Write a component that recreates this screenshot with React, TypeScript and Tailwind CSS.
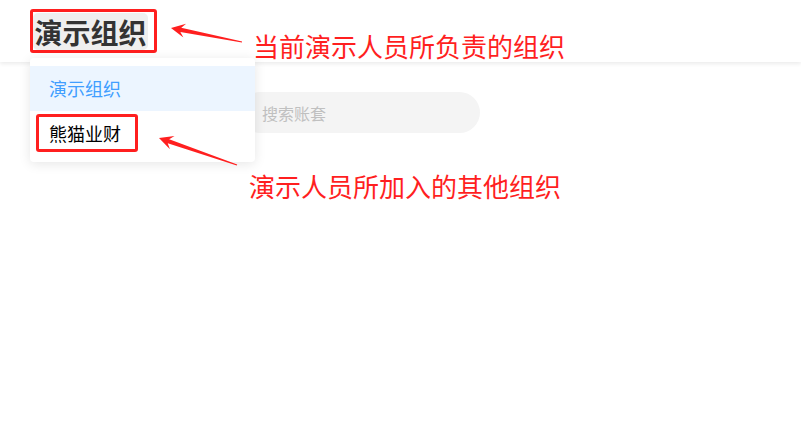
import React from "react";

function Arrow({ tip, tail, head = 14, barb = 7, neck = 2.2, tailW = 0.6 }: { tip: [number, number]; tail: [number, number]; head?: number; barb?: number; neck?: number; tailW?: number }) {
  const dx = tail[0] - tip[0];
  const dy = tail[1] - tip[1];
  const len = Math.hypot(dx, dy);
  const ux = dx / len;
  const uy = dy / len;
  const nx = -uy;
  const ny = ux;
  const B = [tip[0] + head * ux, tip[1] + head * uy];
  const N = [tip[0] + (head - 4) * ux, tip[1] + (head - 4) * uy];
  const pts = [
    [tip[0], tip[1]],
    [B[0] + barb * nx, B[1] + barb * ny],
    [N[0] + neck * nx, N[1] + neck * ny],
    [tail[0] + tailW * nx, tail[1] + tailW * ny],
    [tail[0] - tailW * nx, tail[1] - tailW * ny],
    [N[0] - neck * nx, N[1] - neck * ny],
    [B[0] - barb * nx, B[1] - barb * ny],
  ];
  return <polygon points={pts.map((p) => p.join(",")).join(" ")} fill="#ff1f1f" />;
}

export default function App() {
  return (
    <div
      className="relative w-[801px] h-[433px] bg-white overflow-hidden"
      style={{ fontFamily: '"Noto Sans CJK SC", "Noto Sans", sans-serif' }}
    >
      <header className="h-[62px] bg-white shadow-[0_2px_4px_rgba(0,0,0,0.08)] flex items-start pl-[30px] pt-[9px] relative z-10">
        <div className="border-[3px] border-[#ff1f1f] rounded-[3px] w-[127px] h-[44px] flex items-start pt-[1px]">
          <span className="bg-[#efefef] rounded-[5px] w-[115px] h-[37px] flex items-center justify-center text-[28px] font-bold text-[#333] leading-none">
            演示组织
          </span>
        </div>
      </header>

      <main className="pt-[30px] pl-[240px]">
        <div className="w-[240px] h-[41px] rounded-full bg-[#f4f4f4] flex items-center pl-[22px] text-[16px] text-[#c0c0c0]">
          搜索账套
        </div>
      </main>

      <div className="absolute left-[30px] top-[58px] w-[225px] bg-white rounded-[4px] shadow-[0_2px_12px_rgba(0,0,0,0.1)] pt-[8px] pb-[6px] z-20">
        <div className="h-[45px] bg-[#ecf5ff] flex items-center pl-[19px] text-[18px] text-[#409eff]">演示组织</div>
        <div className="h-[45px] flex items-start pl-[6px] pt-[3px]">
          <div className="border-[3px] border-[#ff1f1f] rounded-[3px] w-[102px] h-[38px] flex items-center pl-[10px] text-[18px] text-black">
            熊猫业财
          </div>
        </div>
      </div>

      <div className="absolute left-[253px] top-[29px] text-[26px] leading-[34px] text-[#ff1f1f] z-30 whitespace-nowrap">
        当前演示人员所负责的组织
      </div>
      <div className="absolute left-[249px] top-[169px] text-[26px] leading-[34px] text-[#ff1f1f] z-30 whitespace-nowrap">
        演示人员所加入的其他组织
      </div>

      <svg className="absolute left-0 top-0 z-30 pointer-events-none" width="801" height="433">
        <Arrow tip={[171, 28]} tail={[242, 42]} />
        <Arrow tip={[159, 138]} tail={[237, 165]} />
      </svg>
    </div>
  );
}
